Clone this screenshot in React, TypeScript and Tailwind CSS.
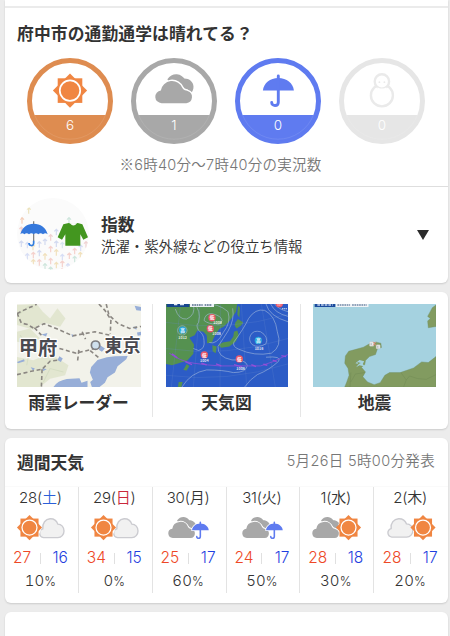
import { clsx } from "clsx";
import type { ReactNode } from "react";

type Weather = "sun" | "cloud" | "umbrella" | "snow";

const COMMUTE: { kind: Weather; count: number; color: string; fill: string }[] = [
  { kind: "sun", count: 6, color: "text-[#de8c50]", fill: "#de8c50" },
  { kind: "cloud", count: 1, color: "text-[#a8a8a8]", fill: "#a8a8a8" },
  { kind: "umbrella", count: 0, color: "text-[#5f7bf0]", fill: "#5f7bf0" },
  { kind: "snow", count: 0, color: "text-[#e6e6e6]", fill: "#e6e6e6" },
];

const WEEK = [
  { day: "28", dow: "土", dowClass: "text-[#2b5fd9]", icon: "sun-cloud", high: 27, low: 16, rain: 10 },
  { day: "29", dow: "日", dowClass: "text-[#c9283a]", icon: "sun-cloud", high: 34, low: 15, rain: 0 },
  { day: "30", dow: "月", dowClass: "", icon: "cloud-rain", high: 25, low: 17, rain: 60 },
  { day: "31", dow: "火", dowClass: "", icon: "cloud-rain", high: 24, low: 17, rain: 50 },
  { day: "1", dow: "水", dowClass: "", icon: "cloud-sun", high: 28, low: 18, rain: 30 },
  { day: "2", dow: "木", dowClass: "", icon: "light-sun", high: 28, low: 17, rain: 20 },
];

// x, y, colour of the small arrows behind the index icons
const ARROWS: [number, number, string][] = [
  [36, 80, "#f3cdb8"], [56, 50, "#ece3bd"], [177, 80, "#cfe6dd"],
  [34, 108, "#f3d3cf"], [122, 131, "#f0d2d2"], [139, 115, "#d3daf0"],
  [34, 150, "#d3daf0"], [52, 154, "#d7def5"], [69, 160, "#f1e1bd"], [88, 152, "#d3daf0"], [105, 144, "#d3daf0"],
  [122, 166, "#f5d1cc"], [139, 150, "#d3daf0"], [157, 154, "#d7e6f0"], [194, 172, "#f5d1cc"], [212, 162, "#d7def5"], [228, 152, "#f0d2d2"],
  [52, 188, "#d7def5"], [70, 184, "#f5d1cc"], [88, 178, "#d3daf0"], [105, 188, "#f1e1bd"], [139, 176, "#f1e1bd"], [157, 190, "#d7def5"],
  [178, 186, "#f5d1cc"], [194, 196, "#cfe6dd"], [211, 184, "#f1e1bd"],
  [70, 206, "#f1e1bd"], [88, 206, "#f5d1cc"], [105, 218, "#cfe6dd"], [122, 202, "#f5d1cc"], [139, 214, "#f1e1bd"], [157, 210, "#f5d1cc"],
  [174, 218, "#d7def5"], [122, 228, "#cfe6dd"], [157, 232, "#f5d1cc"],
];

// Origin is the centre of the sun
function SunShape() {
  return (
    <>
      <rect x="-12.3" y="-12.3" width="24.6" height="24.6" fill="#f08642" />
      <rect x="-12.1" y="-12.1" width="24.2" height="24.2" fill="#f08642" transform="rotate(45)" />
      <circle r="10.2" fill="#f08642" stroke="#fff" strokeWidth="1.7" />
    </>
  );
}

const CLOUD =
  "M6.6 29.2A6.4 6.4 0 0 1 5.9 16.5A10.8 10.8 0 0 1 26.8 14.2C28 16.4 30 16.2 31.6 17A6.3 6.3 0 0 1 30.4 29.2Z";

// Rounder cloud with a big right lobe, 36 x 29
const LIGHT_CLOUD =
  "M6.5 28.4A6.3 6.3 0 0 1 5.6 16.2C4.6 8 9.5 2.6 15.6 2.2C20.5 2 24.8 5 26.4 9.6C31.6 9.6 35 14 35 19C35 24 31.4 28.4 26.6 28.4Z";

// 39 x 30 drawing, front cloud over a second one
function CloudShape() {
  return (
    <>
      <path
        d="M12.5 5.2C15 1.5 18.5 0 22 .3C26 .6 28 3 29.5 4.6C34.5 4.6 38.4 8 38.6 12.5C38.7 15.5 37.5 18 35.8 19.6L20 18Z"
        fill="#a8a8a8"
      />
      <path d={CLOUD} transform="translate(-.2 0) scale(1.04 1)" fill="#a8a8a8" stroke="#fff" strokeWidth="2.8" paintOrder="stroke" />
    </>
  );
}

// 32 x 32 drawing
function UmbrellaShape({ fill }: { fill: string }) {
  return (
    <g fill="none" stroke={fill} strokeLinecap="round">
      <path d="M.4 16.3C1.2 9 7.5 3.8 15.8 3.8S30.6 9 31.4 16.3Z" fill={fill} stroke="none" />
      <path d="M15.8 1.8V28c0 4.4-6.6 4.4-6.6.2" strokeWidth="2.9" />
    </g>
  );
}

function SnowmanShape() {
  return (
    <g fill="#fff" stroke="#eaeaea" strokeWidth="2.4">
      <circle cx="12.5" cy="21.5" r="11" />
      <circle cx="12.5" cy="7.5" r="7.2" />
      <path d="M8 13.4C10 15 15 15 17 13.4L16 17H9Z" stroke="none" />
      <circle cx="10" cy="8.3" r=".9" fill="#eaeaea" stroke="none" />
      <circle cx="15" cy="8.3" r=".9" fill="#eaeaea" stroke="none" />
    </g>
  );
}

function LightCloudShape() {
  return <path d={LIGHT_CLOUD} fill="#f1f1f1" stroke="#cbcbd0" strokeWidth="1.9" />;
}

function CommuteIcon({ kind, fill }: { kind: Weather; fill: string }) {
  return (
    <svg viewBox="0 0 86 86" className="absolute inset-0 size-full">
      <circle cx="43" cy="43" r="40.5" fill="#fff" stroke="currentColor" strokeWidth="5" />
      <path d="M4.8 57H81.2A41 41 0 0 1 4.8 57Z" fill="currentColor" />
      <path d="M7.6 57A38 38 0 0 0 78.4 57" fill="none" stroke="#fff" strokeWidth=".5" opacity=".2" />
      {kind === "sun" && <g transform="translate(43 32.6)"><SunShape /></g>}
      {kind === "cloud" && <g transform="translate(23.9 16)"><CloudShape /></g>}
      {kind === "umbrella" && <g transform="translate(27.5 16.2)"><UmbrellaShape fill={fill} /></g>}
      {kind === "snow" && <g transform="translate(30.4 15.9)"><SnowmanShape /></g>}
    </svg>
  );
}

function WeekIcon({ icon }: { icon: string }) {
  return (
    <svg viewBox="0 0 50 26" className="h-[26px] w-[50px] shrink-0">
      {icon === "sun-cloud" && (
        <>
          <g transform="translate(22.8 2.2) scale(.72)"><LightCloudShape /></g>
          <circle cx="13.5" cy="12.6" r="11.6" fill="#fff" />
          <g transform="translate(13.5 12.6) scale(.735)"><SunShape /></g>
        </>
      )}
      {icon === "cloud-rain" && (
        <>
          <g transform="translate(4 1.8) scale(.725)"><CloudShape /></g>
          <g transform="translate(27.8 6.4) scale(.54)">
            <path
              d="M.4 16.3C1.2 9 7.5 3.8 15.8 3.8S30.6 9 31.4 16.3Z"
              fill="#fff"
              stroke="#fff"
              strokeWidth="3"
              strokeLinejoin="round"
            />
            <UmbrellaShape fill="#5f7bf0" />
          </g>
        </>
      )}
      {icon === "cloud-sun" && (
        <>
          <g transform="translate(0 1.8) scale(.725)"><CloudShape /></g>
          <circle cx="36.5" cy="12.6" r="10.5" fill="#fff" />
          <g transform="translate(36.5 12.6) scale(.735)"><SunShape /></g>
        </>
      )}
      {icon === "light-sun" && (
        <>
          <g transform="translate(1 2.2) scale(.74 .7)"><LightCloudShape /></g>
          <circle cx="37" cy="12.6" r="10.5" fill="#fff" />
          <g transform="translate(37 12.6) scale(.735)"><SunShape /></g>
        </>
      )}
    </svg>
  );
}

function IndexBadge() {
  return (
    <svg viewBox="21 21 216 216" className="size-[72px] shrink-0">
      <clipPath id="badge">
        <circle cx="129" cy="129" r="108" />
      </clipPath>
      <g clipPath="url(#badge)">
        <rect x="21" y="21" width="216" height="216" fill="#fbfbfb" />
        {ARROWS.map(([x, y, color]) => (
          <path
            key={`${x}-${y}`}
            d={`M${x - 6} ${y + 6}L${x} ${y}L${x + 6} ${y + 6}M${x} ${y + 2}V${y + 18}`}
            fill="none"
            stroke={color}
            strokeWidth="3.6"
          />
        ))}
      </g>
      <path d="M71 91V150" stroke="#777" strokeWidth="3.5" />
      <path d="M31 130C36 109 51 98 71 98S108 109 113 130Q106 124 99 130Q92 124 85 130Q78 124 71 130Q64 124 57 130Q50 124 43 130Q37 124 31 130Z" fill="#3578dc" />
      <path d="M71 149V157C71 166 57 166 57 156" fill="none" stroke="#2f7de0" strokeWidth="5" />
      <path d="M176 96Q189 102 203 96L217 100L234 139L220 146L211 130V164H166V130L156 146L143 139L160 100Z" fill="#43961f" />
      <path d="M180 97Q190 110 201 97Z" fill="#fbfbfb" />
    </svg>
  );
}

function RadarMap() {
  return (
    <svg viewBox="51 57 371 248" preserveAspectRatio="none" className="h-[83px] w-[124px]">
      <rect x="51" y="57" width="371" height="248" fill="#f2f2ea" />
      <g fill="#dde3c8" opacity=".75">
        <path d="M51 60L110 57L128 80L150 100L172 70L196 100L180 125L130 112L100 134L51 120Z" />
        <path d="M51 140L90 130L120 160L80 175L51 170Z" />
        <path d="M51 215L100 225L150 205L205 240L195 270L150 280L120 305H51Z" />
      </g>
      <path d="M55 90L85 64L100 70M60 150L90 190L80 240M130 290L150 250L190 260" fill="none" stroke="#d5ddc3" strokeWidth="3" />
      <g fill="#97aed8">
        <path d="M160 305Q172 286 200 281L238 279L244 292L262 286V305Z" />
        <path d="M275 305L270 290L278 283L269 262L273 245L292 224L320 216L344 213L382 212L378 222L352 243L344 262L322 276L314 292L298 305Z" />
        <path d="M403 62L422 66V77L408 76ZM300 180L314 190L305 200L296 194ZM178 213L188 220L182 230L172 224ZM51 230L72 222L74 228L54 234ZM92 246L104 249L100 258ZM128 248L140 252L128 258ZM124 148L142 144L138 154ZM396 126L410 124L408 134ZM214 147L222 150L216 156ZM410 142L422 140V150L412 152Z" />
      </g>
      <g fill="none" stroke="#8b8782" strokeWidth="4.8" strokeDasharray="12 8">
        <path d="M51 86L70 76L110 58" />
        <path d="M51 84L64 114L82 118L102 130L132 116L172 132L218 152L250 146L284 140L328 150" />
        <path d="M246 140L256 162M103 128L124 150" />
        <path d="M296 57L314 76L332 104L330 146" />
        <path d="M318 57L326 90L354 116L388 130L422 124" />
        <path d="M178 190L228 204L284 190M236 194L232 230M270 196L296 218" />
        <path d="M51 268L94 258L126 252L150 228L178 224M126 252L124 305" />
      </g>
      <circle cx="286" cy="180" r="12.5" fill="#cfe0ee" stroke="#7c7c80" strokeWidth="5" />
      <g fill="#4a4a50" stroke="#fff" strokeWidth="7" paintOrder="stroke" strokeLinejoin="round" fontWeight="700" fontFamily="'Noto Sans CJK JP', sans-serif">
        <text x="56" y="208" fontSize="58">甲府</text>
        <text x="313" y="201" fontSize="54">東京</text>
      </g>
    </svg>
  );
}

const PRESSURES = [
  { x: 98, y: 135, label: "高", value: "1012", fill: "#27a6dc", vx: 98, vy: 161 },
  { x: 325, y: 166, label: "高", value: "1016", fill: "#27a6dc", vx: 327, vy: 195 },
  { x: 186, y: 98, label: "低", value: "1006", fill: "#e95768", vx: 203, vy: 116 },
  { x: 181, y: 131, label: "低", value: "1006", fill: "#e95768", vx: 200, vy: 149 },
  { x: 163, y: 209, label: "低", value: "1004", fill: "#e95768", vx: 163, vy: 230 },
  { x: 268, y: 221, label: "低", value: "1006", fill: "#e95768", vx: 272, vy: 254 },
];

function ChartMap() {
  return (
    <svg viewBox="48 57 366 248" preserveAspectRatio="none" className="h-[83px] w-[122px]">
      <rect x="48" y="57" width="366" height="248" fill="#2c5cc6" />
      <g fill="#559150">
        <path d="M48 57H262L258 80L240 106L222 124L208 132L196 148L186 170L172 174L170 150L160 140L142 136L134 150L118 158L132 178L130 206L112 226L86 234L66 240L48 236Z" />
        <path d="M172 148L184 144L189 160L186 172L172 174Z" />
        <path d="M110 236L118 242L110 256L100 254ZM86 290L98 290L94 305H84ZM187 180L200 184L197 204L188 198ZM204 180L218 172L240 168L250 154L252 140L262 136L266 150L258 168L238 184L214 188ZM256 112L264 102L280 112L272 122L260 130L254 122ZM264 62L270 68L268 98L262 88Z" />
      </g>
      <g fill="none" stroke="#6689cf" strokeWidth="1" opacity=".7">
        <path d="M92 57L64 305M150 57L130 305M212 57L210 305M274 57L290 305M334 57L376 305M48 112Q230 142 414 88M48 190Q230 218 414 160M48 270Q230 294 414 236" />
      </g>
      <g fill="none" stroke="#a9bfdf" strokeWidth="2" opacity=".85">
        <path d="M76 72Q86 104 110 102Q138 90 130 57M132 57Q154 76 146 112Q136 120 146 136Q162 148 162 166Q166 190 146 196L130 190" />
        <path d="M162 106Q166 84 186 86Q214 92 216 106Q212 122 198 116Q176 118 162 106ZM160 57Q206 54 234 80Q244 112 220 142Q200 180 178 172M248 70Q254 104 234 138Q220 160 204 184Q202 216 246 224Q286 222 292 240Q290 262 250 262Q220 254 170 254Q122 262 96 305" />
        <path d="M252 170Q282 130 296 100Q316 70 344 76Q376 92 382 140Q398 184 364 204Q314 214 266 192Q246 184 252 170Z" />
        <path d="M302 150Q310 134 332 140Q356 154 348 176Q324 190 306 178Q294 164 302 150ZM348 57Q358 94 414 110M362 57Q374 84 414 94M374 57Q384 72 414 80M348 216Q396 212 386 228Q358 254 322 268Q300 282 284 305" />
        <circle cx="97" cy="136" r="14" />
      </g>
      <path d="M58 204Q90 228 132 234T210 242Q270 242 332 242Q370 232 414 208" fill="none" stroke="#8a4fd6" strokeWidth="2.5" />
      <path d="M66 206L82 218M106 229L126 238M154 234L170 239M198 236L214 242M252 238L276 245M304 238L318 244M340 237L352 240M368 225L380 229M394 211L408 214" fill="none" stroke="#944ed8" strokeWidth="4" />
      {PRESSURES.map((p) => (
        <g key={`${p.x}-${p.y}`} textAnchor="middle" fill="#fff" fontFamily="'Noto Sans CJK JP', sans-serif" fontWeight="700">
          <circle cx={p.x} cy={p.y} r="11" fill={p.fill} />
          <text x={p.x} y={p.y + 5} fontSize="14">{p.label}</text>
          <text x={p.vx} y={p.vy} fontSize="11" opacity=".8">{p.value}</text>
        </g>
      ))}
      {/* Low at the top edge, mostly outside the map */}
      <circle cx="388" cy="56" r="11" fill="#e95768" />
      <path d="M382 60H394M396 71H412" stroke="#fff" strokeWidth="3" strokeDasharray="4 1.5" opacity=".8" />
      <rect x="50" y="57" width="68" height="9" fill="#17468e" />
      <rect x="120" y="57" width="72" height="9" fill="#eef2f6" />
      <path d="M72 59H82M90 59H102" stroke="#dce6f4" strokeWidth="4" />
      <path d="M126 60H158M164 60H186" stroke="#58708f" strokeWidth="4" strokeDasharray="5 2" />
    </svg>
  );
}

function QuakeMap() {
  return (
    <svg viewBox="39 57 368 248" preserveAspectRatio="none" className="h-[83px] w-[123px]">
      <rect x="39" y="57" width="368" height="248" fill="#a5d2e0" />
      <g fill="#829b60" stroke="#708e62" strokeWidth="1.2">
        <path d="M134 305L140 290L147 270L144 250L134 234L136 212L146 198L162 194L190 186L208 176L228 171L242 174L244 187L232 190L226 208L208 214L196 226L194 238L184 246L196 260L188 274L202 290L222 298L240 292L254 270L268 262L300 262L340 248L364 230L384 232L407 214V305Z" />
        <path d="M407 60L396 68L382 94L390 100L382 108L384 128L407 124Z" />
      </g>
      <path d="M166 234L178 224L192 228L188 236L194 244L178 240L168 246L176 236Z" fill="#a5d2e0" />
      <path d="M172 230L182 233L174 237Z" fill="#829b60" />
      <path d="M152 262L150 305M194 262L166 266L152 290M302 262L318 284L310 305M318 284L328 272L352 280L378 282L407 268" fill="none" stroke="#708b54" strokeWidth="1.5" />
      <g fill="#e8eaea" stroke="#b7babd">
        <rect x="208" y="170" width="13" height="13" rx="2" />
        <rect x="228" y="179" width="12" height="12" rx="2" />
      </g>
      <path d="M213 174V180M233 182V188" stroke="#8993a0" strokeWidth="2" />
      <path d="M219 170L227 181M227 170L219 181" stroke="#ed8b79" strokeWidth="2.5" />
      <rect x="44" y="57" width="62" height="9" fill="#1b4b9d" />
      <rect x="107" y="57" width="98" height="9" fill="#f2f5f8" />
      <path d="M52 60H98" stroke="#c6d5ee" strokeWidth="4" strokeDasharray="8 3" />
      <path d="M112 60H150M156 60H200" stroke="#7188a6" strokeWidth="4" strokeDasharray="5 2" />
    </svg>
  );
}

function Card({ className, children }: { className?: string; children?: ReactNode }) {
  return (
    <section className={clsx("bg-white shadow-[0_1px_2px_rgba(0,0,0,0.14)]", className)}>
      {children}
    </section>
  );
}

function MapLink({ label, className, children }: { label: string; className?: string; children: ReactNode }) {
  return (
    <div className={clsx("flex flex-col items-center", className)}>
      {children}
      <span className="mt-1 text-[16.8px] leading-6 font-bold whitespace-nowrap">{label}</span>
    </div>
  );
}

export default function App() {
  return (
    <div className="flex h-[636px] w-[450px] flex-col gap-[9px] overflow-hidden bg-[#ececec] pr-[2px] pl-[5px] font-['Inter','Noto_Sans_CJK_JP',sans-serif] text-[#333]">
      <Card className="h-[283px] shrink-0 rounded-b-md">
        {/* Commute weather */}
        <div className="h-[6px]" />
        <div className="h-[181px] border-t-2 border-b border-t-[#ebebeb] border-b-[#dedede] pt-[13px]">
          <h2 className="pl-3 font-['Noto_Sans_CJK_JP',sans-serif] text-[16.8px] leading-6 font-bold tracking-[0.1px]">府中市の通勤通学は晴れてる？</h2>
          <div className="mt-[13px] flex gap-[18px] pl-[22px]">
            {COMMUTE.map((c) => (
              <div key={c.kind} className={clsx("relative size-[86px]", c.color)}>
                <CommuteIcon kind={c.kind} fill={c.fill} />
                <span className="absolute inset-x-0 top-[58px] text-center text-[13.5px] leading-[18px] font-light text-white">{c.count}</span>
              </div>
            ))}
          </div>
          <p className="mt-[10px] pr-[12px] text-center text-[14.5px] leading-5 font-[350] tracking-[0.25px] text-[#777]">
            <span className="font-['Noto_Sans_CJK_JP',sans-serif]">※</span>6時40分～7時40分の実況数
          </p>
        </div>

        {/* Index row */}
        <div className="flex h-[94px] items-center pl-3">
          <IndexBadge />
          <div className="ml-3 flex-1 pt-[2px]">
            <h3 className="font-['Noto_Sans_CJK_JP',sans-serif] text-[16.8px] leading-6 font-bold">指数</h3>
            <p className="text-[14.4px] leading-[22px] font-[350] whitespace-nowrap">洗濯・紫外線などの役立ち情報</p>
          </div>
          <svg viewBox="0 0 12 10" className="mt-[2px] mr-[19px] h-[10px] w-[12px]">
            <path d="M0 0H12L6 10Z" fill="#2b2b2b" />
          </svg>
        </div>
      </Card>

      {/* Map links */}
      <Card className="flex h-[137px] shrink-0 rounded-md pt-3 pb-3">
        <MapLink label="雨雲レーダー" className="w-[148px] border-r border-[#e6e6e6]">
          <RadarMap />
        </MapLink>
        <MapLink label="天気図" className="w-[148px] border-r border-[#e6e6e6]">
          <ChartMap />
        </MapLink>
        <MapLink label="地震" className="w-[147px]">
          <QuakeMap />
        </MapLink>
      </Card>

      {/* Weekly forecast */}
      <Card className="h-[165px] shrink-0 rounded-md">
        <div className="flex h-[48px] items-center justify-between pr-[13px] pl-3">
          <h2 className="font-['Noto_Sans_CJK_JP',sans-serif] text-[16.8px] leading-6 font-bold">週間天気</h2>
          <span className="pb-[2px] text-[14.5px] font-[350] tracking-[0.35px] text-[#777]">5月26日 5時00分発表</span>
        </div>
        <div className="grid h-[106px] grid-cols-6 border-t border-[#fafafa]">
          {WEEK.map((d) => (
            <div key={d.day} className="flex flex-col items-center border-r border-[#e3e3e3] last:border-r-0">
              <div className="pr-[2px] text-[15px] leading-[22px] font-[350] tracking-[-0.2px]">
                {d.day}(<span className={d.dowClass}>{d.dow}</span>)
              </div>
              <div className="mt-[6px]">
                <WeekIcon icon={d.icon} />
              </div>
              <div className="mt-[6px] mr-[2px] flex items-center gap-[8px] text-[15.5px] leading-[22px] font-[350]">
                <span className="w-[19px] text-[#ee4826]">{d.high}</span>
                <span className="h-[11px] w-px bg-[#e0e0e0]" />
                <span className="w-[19px] text-right text-[#1f3fe0]">{d.low}</span>
              </div>
              <div className="mt-[1px] pr-[2px] text-[15px] leading-[22px] font-[350] tracking-[0.1px] tabular-nums">
                {d.rain}
                <span className="text-[12.5px]">%</span>
              </div>
            </div>
          ))}
        </div>
      </Card>

      <Card className="h-[60px] shrink-0 rounded-t-md" />
    </div>
  );
}
